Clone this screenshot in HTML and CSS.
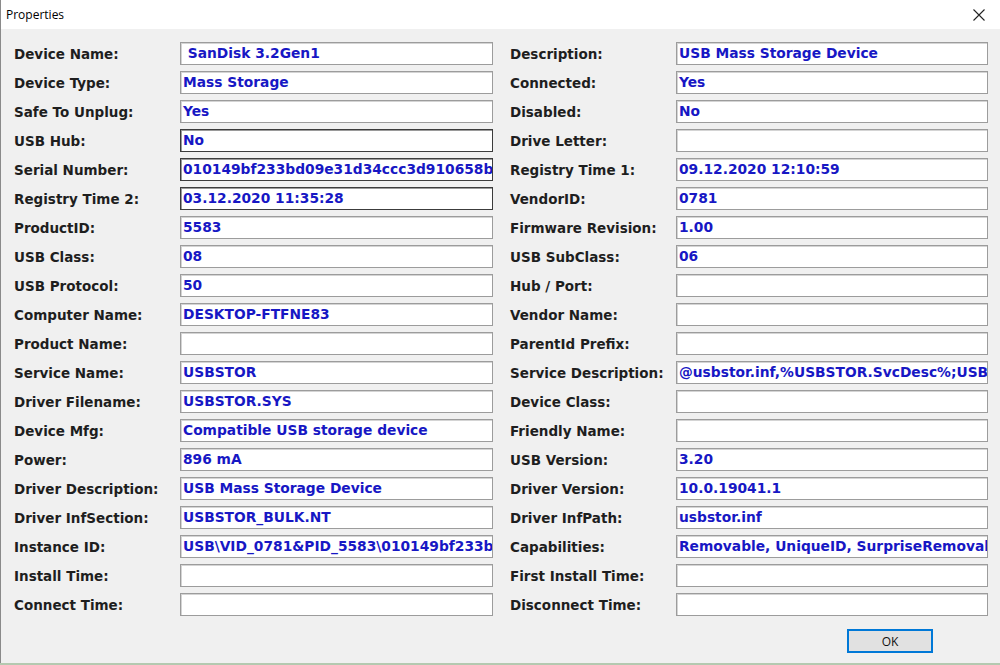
FILE: index.html
```html
<!DOCTYPE html>
<html lang="en">
<head>
    <meta charset="UTF-8">
    <title>Properties</title>
    <link rel="stylesheet" href="styles.css">
</head>
<body>
    <div class="dialog">
        <div class="titlebar">
            <span class="title">Properties</span>
            <svg class="close" width="12" height="12" viewBox="0 0 12 12">
                <path d="M0.5 0.5 L11.5 11.5 M11.5 0.5 L0.5 11.5" stroke="#222" stroke-width="1.1" fill="none"/>
            </svg>
        </div>

        <div class="content">
            <div class="fields">
                <label>Device Name:</label>
                <div class="value">&nbsp;SanDisk 3.2Gen1</div>
                <label>Description:</label>
                <div class="value">USB Mass Storage Device</div>

                <label>Device Type:</label>
                <div class="value">Mass Storage</div>
                <label>Connected:</label>
                <div class="value">Yes</div>

                <label>Safe To Unplug:</label>
                <div class="value">Yes</div>
                <label>Disabled:</label>
                <div class="value">No</div>

                <label>USB Hub:</label>
                <div class="value dark">No</div>
                <label>Drive Letter:</label>
                <div class="value"></div>

                <label>Serial Number:</label>
                <div class="value dark">010149bf233bd09e31d34ccc3d910658bf7a2e</div>
                <label>Registry Time 1:</label>
                <div class="value">09.12.2020 12:10:59</div>

                <label>Registry Time 2:</label>
                <div class="value dark">03.12.2020 11:35:28</div>
                <label>VendorID:</label>
                <div class="value">0781</div>

                <label>ProductID:</label>
                <div class="value">5583</div>
                <label>Firmware Revision:</label>
                <div class="value">1.00</div>

                <label>USB Class:</label>
                <div class="value">08</div>
                <label>USB SubClass:</label>
                <div class="value">06</div>

                <label>USB Protocol:</label>
                <div class="value">50</div>
                <label>Hub / Port:</label>
                <div class="value"></div>

                <label>Computer Name:</label>
                <div class="value">DESKTOP-FTFNE83</div>
                <label>Vendor Name:</label>
                <div class="value"></div>

                <label>Product Name:</label>
                <div class="value"></div>
                <label>ParentId Prefix:</label>
                <div class="value"></div>

                <label>Service Name:</label>
                <div class="value">USBSTOR</div>
                <label>Service Description:</label>
                <div class="value">@usbstor.inf,%USBSTOR.SvcDesc%;USB Mass Storage Driver</div>

                <label>Driver Filename:</label>
                <div class="value">USBSTOR.SYS</div>
                <label>Device Class:</label>
                <div class="value"></div>

                <label>Device Mfg:</label>
                <div class="value">Compatible USB storage device</div>
                <label>Friendly Name:</label>
                <div class="value"></div>

                <label>Power:</label>
                <div class="value">896 mA</div>
                <label>USB Version:</label>
                <div class="value">3.20</div>

                <label>Driver Description:</label>
                <div class="value">USB Mass Storage Device</div>
                <label>Driver Version:</label>
                <div class="value">10.0.19041.1</div>

                <label>Driver InfSection:</label>
                <div class="value">USBSTOR_BULK.NT</div>
                <label>Driver InfPath:</label>
                <div class="value">usbstor.inf</div>

                <label>Instance ID:</label>
                <div class="value">USB\VID_0781&amp;PID_5583\010149bf233bd09e31d34ccc</div>
                <label>Capabilities:</label>
                <div class="value">Removable, UniqueID, SurpriseRemovalOK</div>

                <label>Install Time:</label>
                <div class="value"></div>
                <label>First Install Time:</label>
                <div class="value"></div>

                <label>Connect Time:</label>
                <div class="value"></div>
                <label>Disconnect Time:</label>
                <div class="value"></div>
            </div>

            <div class="button-row">
                <button class="ok">OK</button>
            </div>
        </div>
    </div>
    <div class="behind"></div>
</body>
</html>
```

FILE: styles.css
```css
html, body {
    margin: 0;
    padding: 0;
    width: 1000px;
    height: 665px;
    overflow: hidden;
    background: #b4c9b0;
}

.dialog {
    height: 663px;
    display: flex;
    flex-direction: column;
    background: #f0f0f0;
    border-left: 1px solid #8a8a8a;
    box-sizing: border-box;
}

.titlebar {
    height: 29px;
    flex: none;
    background: #fff;
    display: flex;
    align-items: center;
    justify-content: space-between;
    padding: 0 15px 0 5px;
}

.title {
    font-family: "Open Sans", "Noto Sans", sans-serif;
    font-size: 12px;
    color: #000;
}

.content {
    flex: 1;
    padding: 13px 0 0 13px;
}

/* label | box | label | box, the second label column carries the gap */
.fields {
    display: grid;
    grid-template-columns: 166px 313px 183px 312px;
    grid-auto-rows: 23px;
    row-gap: 6px;
}

.fields label {
    font-family: "DejaVu Sans", sans-serif;
    font-weight: bold;
    font-size: 13.5px;
    color: #1e1e1e;
    display: flex;
    align-items: center;
    white-space: nowrap;
}

.fields label:nth-child(4n+3) {
    padding-left: 17px;
}

.value {
    background: #fff;
    border: 1px solid #9c9c9c;
    box-shadow: inset 1px 1px 0 #d4d4d4;
    box-sizing: border-box;
    font-family: "DejaVu Sans", sans-serif;
    font-weight: bold;
    font-size: 13.8px;
    color: #1717c4;
    padding: 0 2px;
    line-height: 21px;
    white-space: nowrap;
    overflow: hidden;
}

.value.dark {
    border-color: #3c3c3c;
    box-shadow: inset 1px 1px 0 #9a9a9a;
}

.button-row {
    display: flex;
    justify-content: flex-end;
    padding: 13px 67px 0 0;
}

.ok {
    width: 86px;
    height: 24px;
    background: #e1e1e1;
    border: 2px solid #0078d7;
    font-family: "Open Sans", "Noto Sans", sans-serif;
    font-size: 12px;
    color: #111;
    padding: 0;
}

.behind {
    height: 2px;
    background: #b4c9b0;
}
```
